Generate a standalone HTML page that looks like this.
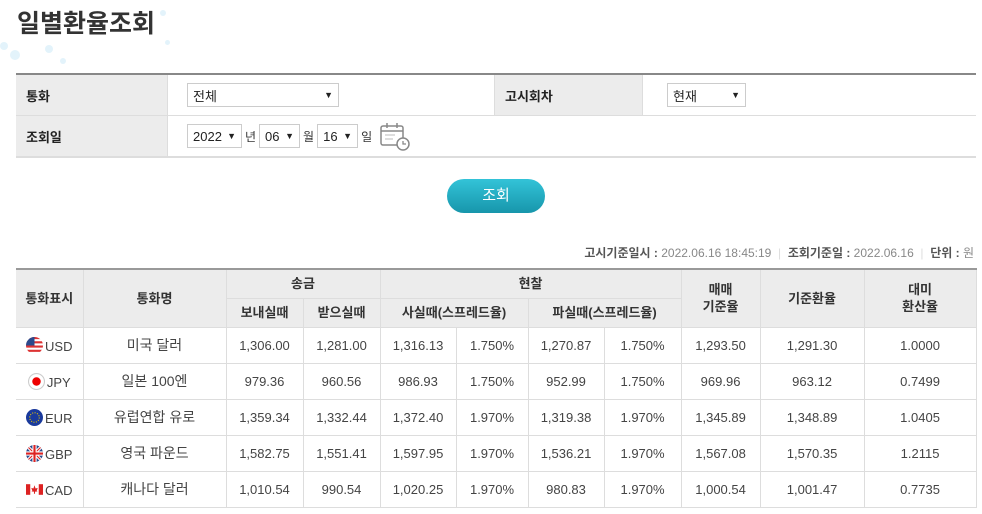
<!DOCTYPE html>
<html><head><meta charset="utf-8"><style>
*{margin:0;padding:0;box-sizing:border-box}
body{width:982px;height:514px;overflow:hidden;background:#fff;font-family:"Liberation Sans","Noto Sans CJK KR",sans-serif;color:#333;position:relative}
.dot{position:absolute;border-radius:50%;background:#e3f3fb}
h1{position:absolute;left:17px;top:4px;font-size:25px;font-weight:bold;color:#333;letter-spacing:0px}
.form{position:absolute;left:16px;top:73px;width:960px;border-top:2px solid #888;border-bottom:2px solid #ddd}
.row{height:41px;display:flex;border-bottom:1px solid #ddd;align-items:center;font-size:13px}
.row:last-child{border-bottom:none;height:40px}
.lab{background:#ececec;width:152px;height:100%;display:flex;align-items:center;padding-left:10px;font-weight:bold;font-size:13px;color:#222;border-right:1px solid #ddd}
.sel{border:1px solid #ccc;height:24px;display:inline-flex;align-items:center;justify-content:space-between;padding:0 5px;font-size:13px;color:#222;background:#fff}
.sel b{font-size:9px}
.btn{position:absolute;left:447px;top:179px;width:98px;height:34px;border-radius:17px;background:linear-gradient(#33c3d8,#1796ab);color:#fff;font-size:15px;text-align:center;line-height:34px}
.info{position:absolute;right:8px;top:244px;font-size:12px;color:#888}
.info b{color:#555}
table{position:absolute;left:16px;top:268px;border-collapse:collapse;border-top:2px solid #999;font-size:13px;color:#444;table-layout:fixed;width:960px}
th{background:#ececec;font-weight:bold;color:#333;border:1px solid #ddd;font-size:13px;line-height:17px}
td{border:1px solid #ddd;text-align:center;height:36px}
tr.h1 th{height:29px}tr.h2 th{height:29px}
svg.fl{vertical-align:-3px;margin-right:2px}
table tr th:first-child,table tr td:first-child{border-left:none}
</style></head><body>
<div class="dot" style="left:10px;top:50px;width:10px;height:10px"></div>
<div class="dot" style="left:45px;top:45px;width:8px;height:8px"></div>
<div class="dot" style="left:0px;top:42px;width:8px;height:8px"></div>
<div class="dot" style="left:160px;top:10px;width:6px;height:6px"></div>
<div class="dot" style="left:165px;top:40px;width:5px;height:5px"></div>
<div class="dot" style="left:60px;top:58px;width:6px;height:6px"></div>
<h1>일별환율조회</h1>
<div class="form">
<div class="row"><div class="lab">통화</div><div style="width:326px;padding-left:19px"><span class="sel" style="width:152px">전체<b>&#9660;</b></span></div><div class="lab" style="width:149px;border-left:1px solid #ddd">고시회차</div><div style="padding-left:24px"><span class="sel" style="width:79px">현재<b>&#9660;</b></span></div></div>
<div class="row"><div class="lab">조회일</div><div style="padding-left:19px;display:flex;align-items:center;gap:3px;font-size:12px">
<span class="sel" style="width:55px">2022<b>&#9660;</b></span>년
<span class="sel" style="width:41px">06<b>&#9660;</b></span>월
<span class="sel" style="width:41px">16<b>&#9660;</b></span>일
<svg width="32" height="30" viewBox="0 0 32 30" style="margin-left:4px"><rect x="2" y="5" width="22" height="19" rx="2" fill="#fff" stroke="#888" stroke-width="1.5"/><line x1="2" y1="10" x2="24" y2="10" stroke="#888" stroke-width="1.5"/><line x1="8" y1="2" x2="8" y2="7" stroke="#888" stroke-width="1.5"/><line x1="18" y1="2" x2="18" y2="7" stroke="#888" stroke-width="1.5"/><line x1="6" y1="14" x2="16" y2="14" stroke="#bbb"/><line x1="6" y1="18" x2="14" y2="18" stroke="#bbb"/><circle cx="24" cy="23" r="6" fill="#fff" stroke="#888" stroke-width="1.5"/><path d="M24 20v3h3" stroke="#888" fill="none" stroke-width="1.3"/></svg></div></div>
</div>
<div class="btn">조회</div>
<div class="info"><b>고시기준일시 :</b> 2022.06.16 18:45:19 &nbsp;<span style="color:#ddd">|</span>&nbsp; <b>조회기준일 :</b> 2022.06.16 &nbsp;<span style="color:#ddd">|</span>&nbsp; <b>단위 :</b> 원</div>
<table>
<colgroup><col style="width:67px"><col style="width:143px"><col style="width:77px"><col style="width:77px"><col style="width:76px"><col style="width:72px"><col style="width:76px"><col style="width:77px"><col style="width:79px"><col style="width:104px"><col style="width:112px"></colgroup>
<tr class="h1"><th rowspan="2">통화표시</th><th rowspan="2">통화명</th><th colspan="2">송금</th><th colspan="4">현찰</th><th rowspan="2">매매<br>기준율</th><th rowspan="2">기준환율</th><th rowspan="2">대미<br>환산율</th></tr>
<tr class="h2"><th>보내실때</th><th>받으실때</th><th colspan="2">사실때(스프레드율)</th><th colspan="2">파실때(스프레드율)</th></tr>
<tr><td><svg class="fl" width="17" height="17" viewBox="0 0 16 16"><clipPath id="c1"><circle cx="8" cy="8" r="8"/></clipPath><g clip-path="url(#c1)"><rect width="16" height="16" fill="#fff"/><rect y="0" width="16" height="2" fill="#d33"/><rect y="4" width="16" height="2" fill="#d33"/><rect y="8" width="16" height="2" fill="#d33"/><rect y="12" width="16" height="2" fill="#d33"/><rect width="8" height="8" fill="#2b4a8c"/></g></svg>USD</td><td style="font-size:14px">미국 달러</td><td>1,306.00</td><td>1,281.00</td><td>1,316.13</td><td>1.750%</td><td>1,270.87</td><td>1.750%</td><td>1,293.50</td><td>1,291.30</td><td>1.0000</td></tr>
<tr><td><svg class="fl" width="17" height="17" viewBox="0 0 16 16"><circle cx="8" cy="8" r="7.5" fill="#fff" stroke="#ccc"/><circle cx="8" cy="8" r="4" fill="#e00"/></svg>JPY</td><td style="font-size:14px">일본 100엔</td><td>979.36</td><td>960.56</td><td>986.93</td><td>1.750%</td><td>952.99</td><td>1.750%</td><td>969.96</td><td>963.12</td><td>0.7499</td></tr>
<tr><td><svg class="fl" width="17" height="17" viewBox="0 0 16 16"><circle cx="8" cy="8" r="8" fill="#1a3a9c"/><circle cx="8" cy="8" r="4.5" fill="none" stroke="#e8c800" stroke-width="1" stroke-dasharray="1 1.35"/></svg>EUR</td><td style="font-size:14px">유럽연합 유로</td><td>1,359.34</td><td>1,332.44</td><td>1,372.40</td><td>1.970%</td><td>1,319.38</td><td>1.970%</td><td>1,345.89</td><td>1,348.89</td><td>1.0405</td></tr>
<tr><td><svg class="fl" width="17" height="17" viewBox="0 0 16 16"><clipPath id="c2"><circle cx="8" cy="8" r="8"/></clipPath><g clip-path="url(#c2)"><rect width="16" height="16" fill="#2a4a8c"/><path d="M0 0L16 16M16 0L0 16" stroke="#fff" stroke-width="3"/><path d="M0 0L16 16M16 0L0 16" stroke="#d22" stroke-width="1"/><path d="M8 0V16M0 8H16" stroke="#fff" stroke-width="4"/><path d="M8 0V16M0 8H16" stroke="#d22" stroke-width="2"/></g></svg>GBP</td><td style="font-size:14px">영국 파운드</td><td>1,582.75</td><td>1,551.41</td><td>1,597.95</td><td>1.970%</td><td>1,536.21</td><td>1.970%</td><td>1,567.08</td><td>1,570.35</td><td>1.2115</td></tr>
<tr><td><svg class="fl" width="17" height="17" viewBox="0 0 16 16"><rect x="0" y="3" width="4" height="10" fill="#d22"/><rect x="12" y="3" width="4" height="10" fill="#d22"/><path d="M8 4L9 7L11 6.5L10 9.5L11 10H8.5V12H7.5V10H5L6 9.5L5 6.5L7 7Z" fill="#d22"/></svg>CAD</td><td style="font-size:14px">캐나다 달러</td><td>1,010.54</td><td>990.54</td><td>1,020.25</td><td>1.970%</td><td>980.83</td><td>1.970%</td><td>1,000.54</td><td>1,001.47</td><td>0.7735</td></tr>
</table>
</body></html>
